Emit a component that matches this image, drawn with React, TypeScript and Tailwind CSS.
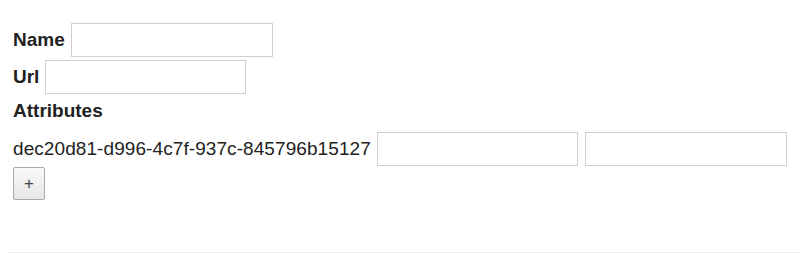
export default function App() {
  return (
    <div className="min-h-[253px] bg-white text-[19px] leading-[22px] text-[#222] font-['Liberation_Sans',Arial,sans-serif]">
      <div className="pl-[13px] pt-[23px]">
        <div className="flex items-center gap-[6px]">
          <label className="font-bold">Name</label>
          <input className="h-[34px] w-[202px] border border-[#d0d0d0] bg-white outline-none" />
        </div>
        <div className="mt-[3px] flex items-center gap-[6px]">
          <label className="font-bold">Url</label>
          <input className="h-[34px] w-[201px] border border-[#d0d0d0] bg-white outline-none" />
        </div>
        <div className="mt-[6px] font-bold">Attributes</div>
        <div className="mt-[10px] flex items-center">
          <span className="tracking-[0.08px]">dec20d81-d996-4c7f-937c-845796b15127</span>
          <input className="ml-[6px] h-[34px] w-[201px] border border-[#d0d0d0] bg-white outline-none" />
          <input className="ml-[7px] h-[34px] w-[202px] border border-[#d0d0d0] bg-white outline-none" />
        </div>
        <button className="mt-px flex h-[33px] w-[32px] items-center justify-center rounded-[2px] border border-[#aaa] bg-gradient-to-b from-[#fafafa] to-[#e6e6e6] text-[17px] text-[#444]">
          +
        </button>
      </div>
      <hr className="ml-[8px] mt-[52px] border-t border-[#eee]" />
    </div>
  );
}
